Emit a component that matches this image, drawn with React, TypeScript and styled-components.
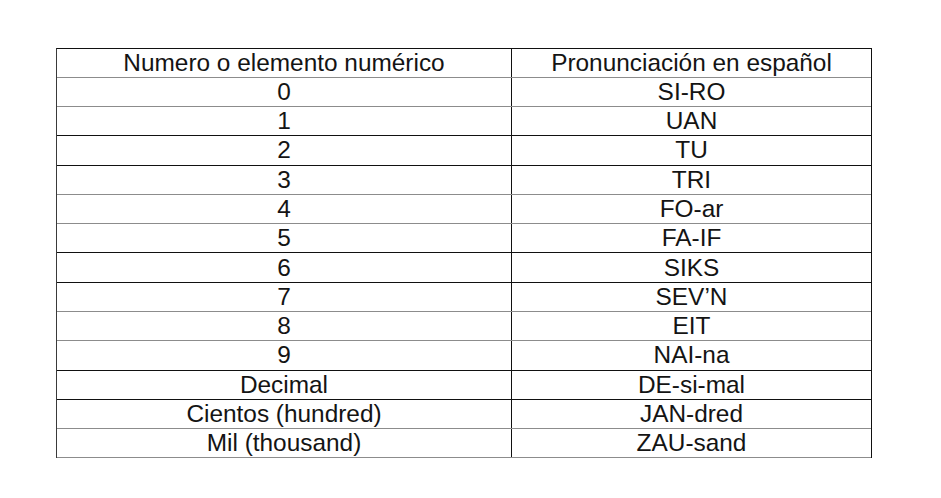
import React from "react";
import styled, { createGlobalStyle } from "styled-components";

const GlobalStyle = createGlobalStyle`
  html, body {
    margin: 0;
    padding: 0;
    background: #ffffff;
  }
  body {
    font-family: "Liberation Sans", Arial, sans-serif;
  }
`;

const Page = styled.div`
  width: 941px;
  height: 498px;
  box-sizing: border-box;
  padding: 47.5px 0 0 56px;
  background: #ffffff;
`;

const Table = styled.div`
  width: 816px;
  box-sizing: border-box;
  border-top: 1px solid #111;
  border-left: 1px solid #3a3a3a;
  border-right: 1px solid #111;
  display: flex;
  flex-direction: column;
`;

const Row = styled.div<{ $grey: boolean }>`
  display: grid;
  grid-template-columns: 454px 1fr;
  height: 29.29px;
  box-sizing: border-box;
  border-bottom: ${(p) => (p.$grey ? "1.6px solid #8c8c8c" : "1px solid #111")};
`;

const Cell = styled.div<{ $divider?: boolean }>`
  display: flex;
  align-items: center;
  justify-content: center;
  box-sizing: border-box;
  border-left: ${(p) => (p.$divider ? "1px solid #111" : "none")};
  font-family: "Liberation Sans", Arial, sans-serif;
  font-size: 24.4px;
  line-height: 27px;
  color: #141414;
  padding-bottom: 1px;
  white-space: nowrap;
`;

const rows: [string, string][] = [
  ["Numero o elemento numérico", "Pronunciación en español"],
  ["0", "SI-RO"],
  ["1", "UAN"],
  ["2", "TU"],
  ["3", "TRI"],
  ["4", "FO-ar"],
  ["5", "FA-IF"],
  ["6", "SIKS"],
  ["7", "SEV’N"],
  ["8", "EIT"],
  ["9", "NAI-na"],
  ["Decimal", "DE-si-mal"],
  ["Cientos (hundred)", "JAN-dred"],
  ["Mil (thousand)", "ZAU-sand"],
];

export default function App() {
  return (
    <>
      <GlobalStyle />
      <Page>
        <Table>
          {rows.map(([a, b], i) => {
            const line = i + 1;
            const grey = line % 4 === 1 || line % 4 === 2;
            return (
              <Row key={i} $grey={grey}>
                <Cell>{a}</Cell>
                <Cell $divider>{b}</Cell>
              </Row>
            );
          })}
        </Table>
      </Page>
    </>
  );
}
